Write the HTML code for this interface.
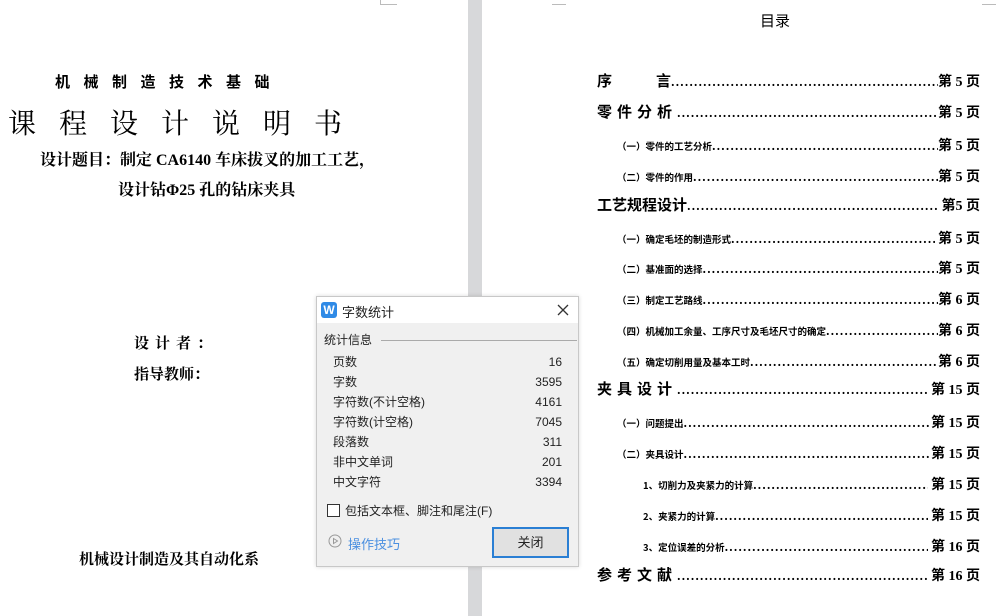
<!DOCTYPE html>
<html><head><meta charset="utf-8"><style>
body{margin:0;width:1005px;height:616px;overflow:hidden;background:#fff;position:relative;font-family:"Liberation Serif","Noto Serif CJK SC",serif;color:#000}
.a{position:absolute;white-space:nowrap}
.b{font-weight:bold}
.row{position:absolute;display:flex;align-items:baseline;white-space:nowrap;right:25px;font-weight:bold}
.row .d{flex:1;overflow:hidden;font-size:11px;letter-spacing:1px}
.row .d::before{content:"...................................................................................................................................................................................................."}
.row .p{font-size:14px;font-family:"Liberation Serif","Noto Sans CJK SC",serif;letter-spacing:0}
.m{font-size:15px;font-family:"Noto Sans CJK SC",sans-serif;left:597px}
.m .l{letter-spacing:5px}
.s{font-size:9.5px;font-family:"Noto Sans CJK SC",sans-serif;left:617px}
.t{font-size:9.5px;font-family:"Noto Sans CJK SC",sans-serif;left:643px}
.dlg{position:absolute;left:316px;top:296px;width:261px;height:269px;background:#f0f0f0;border:1px solid #c8c8c8;font-family:"Liberation Sans","Noto Sans CJK SC",sans-serif;font-size:12px;color:#222;box-shadow:0 0 4px rgba(0,0,0,.15)}
.dlg .r{position:absolute;left:16px;right:16px;display:flex;justify-content:space-between;align-items:baseline}
</style></head><body>
<div class="a" style="left:468px;top:0;width:14px;height:616px;background:#d7d8da"></div>
<div class="a" style="left:380px;top:0;width:16px;height:4px;border-left:1px solid #bbb;border-bottom:1px solid #bbb"></div>
<div class="a" style="left:552px;top:0;width:14px;height:4px;border-bottom:1px solid #bbb"></div>
<div class="a" style="left:982px;top:0;width:14px;height:4px;border-bottom:1px solid #bbb"></div>

<div class="a b" style="left:55px;top:71px;font-size:15px;letter-spacing:13.5px;font-family:'Noto Sans CJK SC',sans-serif">机械制造技术基础</div>
<div class="a" style="left:8px;top:102px;font-size:28px;letter-spacing:23px;font-family:'Noto Serif CJK SC',serif">课程设计说明书</div>
<div class="a b" style="left:40px;top:147px;font-size:16px">设计题目：制定 CA6140 车床拔叉的加工工艺，</div>
<div class="a b" style="left:118px;top:177px;font-size:16px">设计钻Φ25 孔的钻床夹具</div>
<div class="a b" style="left:134px;top:332px;font-size:15px;letter-spacing:6px">设计者：</div>
<div class="a b" style="left:134px;top:363px;font-size:15px">指导教师：</div>
<div class="a b" style="left:79px;top:548px;font-size:15px">机械设计制造及其自动化系</div>

<div class="a" style="left:760px;top:10px;font-size:15px;font-family:'Noto Sans CJK SC',sans-serif">目录</div>

<div class="row m" style="top:70px"><span>序<span style="margin-left:44px">言</span></span><span class="d"></span><span class="p">第 5 页</span></div>
<div class="row m" style="top:101px"><span class="l">零件分析</span><span class="d"></span><span class="p">第 5 页</span></div>
<div class="row s" style="top:135px"><span>（一）零件的工艺分析</span><span class="d"></span><span class="p">第 5 页</span></div>
<div class="row s" style="top:166px"><span>（二）零件的作用</span><span class="d"></span><span class="p">第 5 页</span></div>
<div class="row m" style="top:194px"><span>工艺规程设计</span><span class="d"></span><span class="p">&nbsp;第5 页</span></div>
<div class="row s" style="top:228px"><span>（一）确定毛坯的制造形式</span><span class="d"></span><span class="p">&nbsp;第 5 页</span></div>
<div class="row s" style="top:258px"><span>（二）基准面的选择</span><span class="d"></span><span class="p">第 5 页</span></div>
<div class="row s" style="top:289px"><span>（三）制定工艺路线</span><span class="d"></span><span class="p">第 6 页</span></div>
<div class="row s" style="top:320px"><span>（四）机械加工余量、工序尺寸及毛坯尺寸的确定</span><span class="d"></span><span class="p">第 6 页</span></div>
<div class="row s" style="top:351px"><span>（五）确定切削用量及基本工时</span><span class="d"></span><span class="p">第 6 页</span></div>
<div class="row m" style="top:378px"><span class="l">夹具设计</span><span class="d"></span><span class="p">&nbsp;第 15 页</span></div>
<div class="row s" style="top:412px"><span>（一）问题提出</span><span class="d"></span><span class="p">第 15 页</span></div>
<div class="row s" style="top:443px"><span>（二）夹具设计</span><span class="d"></span><span class="p">第 15 页</span></div>
<div class="row t" style="top:474px"><span>1、切削力及夹紧力的计算</span><span class="d"></span><span class="p">&nbsp;第 15 页</span></div>
<div class="row t" style="top:505px"><span>2、夹紧力的计算</span><span class="d"></span><span class="p">&nbsp;第 15 页</span></div>
<div class="row t" style="top:536px"><span>3、定位误差的分析</span><span class="d"></span><span class="p">&nbsp;第 16 页</span></div>
<div class="row m" style="top:564px"><span class="l">参考文献</span><span class="d"></span><span class="p">&nbsp;第 16 页</span></div>

<div class="dlg">
 <div style="position:absolute;left:0;top:0;right:0;height:26px;background:#fff"></div>
 <div style="position:absolute;left:4px;top:5px;width:16px;height:16px;background:#2f8ae6;border-radius:3px;color:#fff;font-size:12px;font-weight:bold;text-align:center;line-height:16px">W</div>
 <div class="a" style="left:25px;top:5px;font-size:13px">字数统计</div>
 <svg class="a" style="left:240px;top:7px" width="12" height="12"><path d="M1 1L11 11M11 1L1 11" stroke="#333" stroke-width="1.3"/></svg>
 <div class="a" style="left:7px;top:34px">统计信息</div>
 <div class="a" style="left:64px;top:43px;width:196px;height:1px;background:#aaa"></div>
 <div class="r" style="top:56px"><span>页数</span><span>16</span></div>
 <div class="r" style="top:76px"><span>字数</span><span>3595</span></div>
 <div class="r" style="top:96px"><span>字符数(不计空格)</span><span>4161</span></div>
 <div class="r" style="top:116px"><span>字符数(计空格)</span><span>7045</span></div>
 <div class="r" style="top:136px"><span>段落数</span><span>311</span></div>
 <div class="r" style="top:156px"><span>非中文单词</span><span>201</span></div>
 <div class="r" style="top:176px"><span>中文字符</span><span>3394</span></div>
 <div class="a" style="left:10px;top:207px;width:11px;height:11px;border:1px solid #333;background:#fff"></div>
 <div class="a" style="left:28px;top:205px">包括文本框、脚注和尾注(F)</div>
 <svg class="a" style="left:11px;top:237px" width="14" height="14"><circle cx="7" cy="7" r="6" fill="none" stroke="#999"/><path d="M5.5 4.5L9.5 7L5.5 9.5Z" fill="none" stroke="#999"/></svg>
 <div class="a" style="left:31px;top:237px;color:#4a8fe0;font-size:13px">操作技巧</div>
 <div class="a" style="left:175px;top:230px;width:73px;height:27px;border:2px solid #2a7fd4;background:#e1e1e1;text-align:center;line-height:27px;font-size:13px">关闭</div>
</div>
</body></html>
